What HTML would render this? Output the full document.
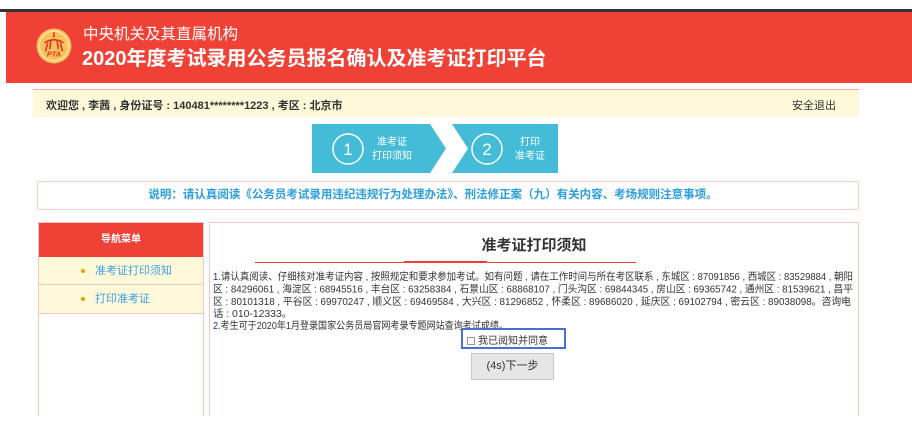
<!DOCTYPE html>
<html><head><meta charset="utf-8"><style>
*{margin:0;padding:0;box-sizing:border-box}
body{width:912px;height:436px;background:#fff;font-family:"Liberation Sans","Noto Sans CJK SC",sans-serif;position:relative;overflow:hidden}
.a{position:absolute}
</style></head><body>
<div class="a" style="left:0;top:9px;width:912px;height:3px;background:#333"></div>
<div class="a" style="left:6px;top:12px;width:906px;height:71px;background:#ef4136"></div>
<svg class="a" style="left:36px;top:28px" width="36" height="36" viewBox="0 0 34 34">
<circle cx="17" cy="17" r="16.5" fill="#f9c35a"/><circle cx="17" cy="17" r="14" fill="none" stroke="#fde6b0" stroke-width="1.2"/>
<path d="M17 4 L17 9 M8 14 Q17 8 26 14 M11 14 L9 22 M23 14 L25 22 M14 12 L13 20 M20 12 L21 20" stroke="#e2322a" stroke-width="1.5" fill="none"/>
<text x="17" y="27" font-size="7" font-weight="bold" fill="#e2322a" text-anchor="middle" font-style="italic">PTA</text></svg>
<div class="a" style="left:83px;top:26px;color:#fff;font-size:15.5px;line-height:18px">中央机关及其直属机构</div>
<div class="a" style="left:82px;top:46px;color:#fff;font-size:20px;font-weight:bold;line-height:26px">2020年度考试录用公务员报名确认及准考证打印平台</div>
<div class="a" style="left:33px;top:89px;width:826px;height:28px;background:#fff9d9;border-top:1px solid #f6a89a"></div>
<div class="a" style="left:46px;top:97px;font-size:11px;color:#333;font-weight:bold">欢迎您 , 李茜 , 身份证号 : 140481********1223 , 考区 : 北京市</div>
<div class="a" style="left:792px;top:97px;font-size:11px;color:#333">安全退出</div>
<svg class="a" style="left:312px;top:124px" width="246" height="49">
<polygon points="0,0 118,0 134,24.5 118,49 0,49" fill="#44bcd8"/>
<polygon points="140,0 246,0 246,49 140,49 156,24.5" fill="#44bcd8"/>
<circle cx="36" cy="25" r="15" fill="none" stroke="#fff" stroke-width="1.5"/>
<text x="36" y="31" font-size="17" fill="#fff" text-anchor="middle">1</text>
<circle cx="175" cy="25" r="15" fill="none" stroke="#fff" stroke-width="1.5"/>
<text x="175" y="31" font-size="17" fill="#fff" text-anchor="middle">2</text>
<text x="80" y="21" font-size="10" fill="#fff" text-anchor="middle">准考证</text>
<text x="80" y="35" font-size="10" fill="#fff" text-anchor="middle">打印须知</text>
<text x="218" y="21" font-size="10" fill="#fff" text-anchor="middle">打印</text>
<text x="218" y="35" font-size="10" fill="#fff" text-anchor="middle">准考证</text>
</svg>
<div class="a" style="left:37px;top:181px;width:822px;height:29px;border:1px solid #f6cfc8;border-radius:2px;text-align:center;line-height:27px;color:#2a9ee0;font-weight:bold;font-size:11.5px;padding-right:30px">说明：请认真阅读《公务员考试录用违纪违规行为处理办法》、刑法修正案（九）有关内容、考场规则注意事项。</div>
<div class="a" style="left:38px;top:222px;width:166px;height:194px;border:1px solid #f3c8c0;border-bottom:none">
<div style="height:34px;background:#ef4136;color:#fff;font-size:10px;font-weight:bold;text-align:center;line-height:34px">导航菜单</div>
<div style="height:28px;background:#fff9d9;border-bottom:1px solid #f3c8c0;font-size:11px;color:#3aa0e6;line-height:28px;padding-left:42px;position:relative"><span style="position:absolute;left:42px;top:12px;width:4px;height:4px;border-radius:2px;background:#f0a000"></span><span style="margin-left:14px">准考证打印须知</span></div>
<div style="height:29px;background:#fff9d9;border-bottom:1px solid #f3c8c0;font-size:11px;color:#3aa0e6;line-height:28px;padding-left:42px;position:relative"><span style="position:absolute;left:42px;top:12px;width:4px;height:4px;border-radius:2px;background:#f0a000"></span><span style="margin-left:14px">打印准考证</span></div>
</div>
<div class="a" style="left:209px;top:222px;width:650px;height:194px;border:1px solid #f3c8c0;border-bottom:none"></div>
<div class="a" style="left:209px;top:234px;width:650px;text-align:center;font-size:15px;font-weight:bold;color:#333">准考证打印须知</div>
<div class="a" style="left:255px;top:262px;width:381px;height:1px;background:#ef4136"></div>
<div class="a" style="left:404px;top:261px;width:83px;height:2px;background:#ef4136"></div>
<svg class="a" style="left:213px;top:268px" width="645" height="66" font-size="10.4" fill="#333" font-family="Liberation Sans, Noto Sans CJK SC, sans-serif">
<text x="0" y="12" textLength="640" lengthAdjust="spacingAndGlyphs">1.请认真阅读、仔细核对准考证内容 , 按照规定和要求参加考试。如有问题 , 请在工作时间与所在考区联系 , 东城区 : 87091856 , 西城区 : 83529884 , 朝阳</text>
<text x="0" y="24.5" textLength="640" lengthAdjust="spacingAndGlyphs">区 : 84296061 , 海淀区 : 68945516 , 丰台区 : 63258384 , 石景山区 : 68868107 , 门头沟区 : 69844345 , 房山区 : 69365742 , 通州区 : 81539621 , 昌平</text>
<text x="0" y="37" textLength="638" lengthAdjust="spacingAndGlyphs">区 : 80101318 , 平谷区 : 69970247 , 顺义区 : 69469584 , 大兴区 : 81296852 , 怀柔区 : 89686020 , 延庆区 : 69102794 , 密云区 : 89038098。咨询电</text>
<text x="0" y="49">话 : 010-12333。</text>
<text x="0" y="61" textLength="295" lengthAdjust="spacingAndGlyphs">2.考生可于2020年1月登录国家公务员局官网考录专题网站查询考试成绩。</text>
</svg>
<div class="a" style="left:461px;top:328px;width:105px;height:21px;border:2px solid #4a6fd0;font-size:10px;color:#333;padding:2px 0 0 4px;background:#fff"><span style="display:inline-block;width:8px;height:8px;border:1px solid #999;margin-right:3px;vertical-align:-1px"></span>我已阅知并同意</div>
<div class="a" style="left:471px;top:353px;width:83px;height:27px;background:#e6e6e6;border:1px solid #c8c8c8;text-align:center;line-height:25px;font-size:11px;color:#333">(4s)下一步</div>
</body></html>
